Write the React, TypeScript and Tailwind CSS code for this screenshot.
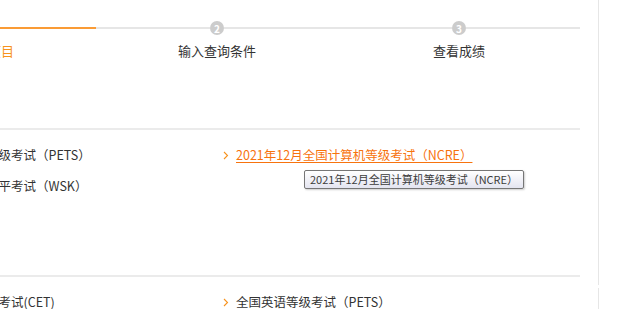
import React from 'react'

const font = { fontFamily: '"Noto Sans CJK SC", "Noto Sans", sans-serif' }

const steps = [
  { n: 1, label: '选择查询项目', done: true },
  { n: 2, label: '输入查询条件', done: false },
  { n: 3, label: '查看成绩', done: false },
]

function Chevron() {
  return (
    <svg width="6" height="9" viewBox="0 0 6 9" className="shrink-0">
      <path d="M1 1 L4.5 4.5 L1 8" fill="none" stroke="#f7931e" strokeWidth="1.1" />
    </svg>
  )
}

function Item({ text, active, tip }: { text: string; active?: boolean; tip?: string }) {
  return (
    <div className="relative flex items-center gap-[7px] h-[31px]">
      <Chevron />
      <span
        className={
          active
            ? 'text-[12.5px] text-[#f7730e] underline underline-offset-[2px] decoration-[#f7730e] whitespace-nowrap'
            : 'text-[12.5px] text-[#333] whitespace-nowrap'
        }
      >
        {text}
      </span>
      {tip && (
        <div className="absolute left-[81px] top-[30px] h-[19px] px-[5px] flex items-center rounded-[2px] border border-[#767676] bg-gradient-to-b from-white to-[#e4e5f0] text-[11px] text-[#3c3c3c] whitespace-nowrap shadow-[1px_1px_2px_rgba(0,0,0,0.2)]">
          {tip}
        </div>
      )}
    </div>
  )
}

export default function App() {
  return (
    <div className="w-[620px] h-[309px] overflow-hidden bg-white flex" style={font}>
      <div className="ml-[-146px] w-[726px] shrink-0">
        {/* steps */}
        <div className="flex pt-[21px]">
          {steps.map((s) => (
            <div key={s.n} className="flex-1 flex flex-col items-center">
              <div className="w-full flex items-center h-[14px]">
                <div className={s.done ? 'flex-1 h-[2px] bg-[#fa9b35]' : 'flex-1 h-[2px] bg-[#e6e6e6]'} />
                <div
                  className={
                    s.done
                      ? 'w-[14px] h-[14px] rounded-full bg-[#fa9b35] text-white text-[10px] font-bold flex items-center justify-center'
                      : 'w-[14px] h-[14px] rounded-full bg-[#cccccc] text-white text-[10px] font-bold flex items-center justify-center'
                  }
                >
                  {s.n}
                </div>
                <div className={s.done ? 'flex-1 h-[2px] bg-[#fa9b35]' : 'flex-1 h-[2px] bg-[#e6e6e6]'} />
              </div>
              <div
                className={
                  s.done
                    ? 'mt-[7px] text-[13px] leading-[18px] text-[#f7931e]'
                    : 'mt-[7px] text-[13px] leading-[18px] text-[#333]'
                }
              >
                {s.label}
              </div>
            </div>
          ))}
        </div>

        {/* section 1 */}
        <div className="mt-[68px] border-t-2 border-[#ebebeb] pt-[10px] pl-[69px] grid grid-cols-[300px_1fr] h-[147px] content-start">
          <Item text="全国英语等级考试（PETS）" />
          <Item text="2021年12月全国计算机等级考试（NCRE）" active tip="2021年12月全国计算机等级考试（NCRE）" />
          <Item text="全国外语水平考试（WSK）" />
        </div>

        {/* section 2 */}
        <div className="border-t-2 border-[#ebebeb] pt-[10px] pl-[69px] grid grid-cols-[300px_1fr]">
          <Item text="英语四六级考试(CET)" />
          <Item text="全国英语等级考试（PETS）" />
        </div>
      </div>

      <div className="ml-[18px] flex flex-col shrink-0">
        <div className="w-px h-[285px] bg-[#e6e6e6]" />
        <div className="w-px h-[3px]" />
        <div className="w-px flex-1 bg-[#e6e6e6]" />
      </div>
    </div>
  )
}
